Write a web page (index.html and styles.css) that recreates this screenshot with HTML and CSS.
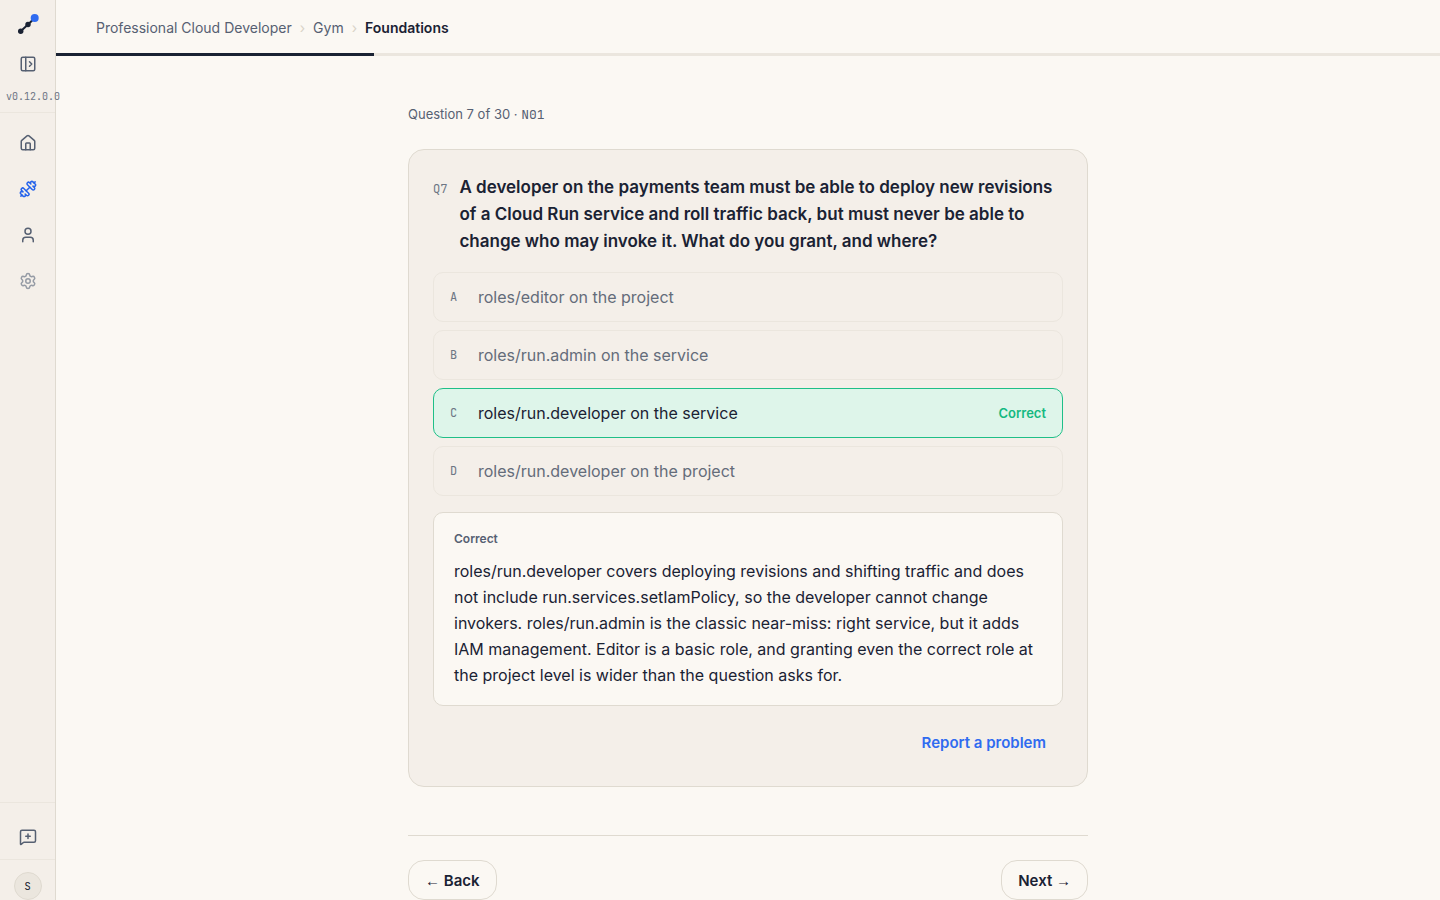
FILE: index.html
```html
<!DOCTYPE html>
<html lang="en">

<head>
    <meta charset="UTF-8">
    <meta name="viewport" content="width=device-width, initial-scale=1.0">
    <title>Foundations - Gym</title>
    <link rel="stylesheet" href="styles.css">
</head>

<body>
    <div class="app">
        <aside class="sidebar">
            <div class="sidebar-head">
                <a class="logo" href="#" aria-label="Home page">
                    <svg width="24" height="24" viewBox="0 0 24 24">
                        <path d="M4.7 19.3 12 12.5 18.7 6" stroke="#1a2233" stroke-width="2" fill="none" />
                        <circle cx="4.7" cy="19.3" r="2.7" fill="#1a2233" />
                        <circle cx="12" cy="12.5" r="2.7" fill="#1a2233" />
                        <circle cx="18.7" cy="6" r="4" fill="#2f6bf0" />
                    </svg>
                </a>
                <button class="icon-btn toggle" type="button" aria-label="Expand sidebar">
                    <svg class="icon" viewBox="0 0 24 24">
                        <rect width="18" height="18" x="3" y="3" rx="2" />
                        <path d="M9 3v18" />
                        <path d="m14 9 3 3-3 3" />
                    </svg>
                </button>
                <span class="version">v0.12.0.0</span>
            </div>
            <nav class="side-nav">
                <a class="icon-btn" href="#" aria-label="Home">
                    <svg class="icon" viewBox="0 0 24 24">
                        <path d="M15 21v-8a1 1 0 0 0-1-1h-4a1 1 0 0 0-1 1v8" />
                        <path d="M3 10a2 2 0 0 1 .709-1.528l7-6a2 2 0 0 1 2.582 0l7 6A2 2 0 0 1 21 10v9a2 2 0 0 1-2 2H5a2 2 0 0 1-2-2z" />
                    </svg>
                </a>
                <a class="icon-btn active" href="#" aria-label="Gym">
                    <svg class="icon" viewBox="0 0 24 24">
                        <path d="M17.596 12.768a2 2 0 1 0 2.829-2.829l-1.768-1.767a2 2 0 0 0 2.828-2.829l-2.828-2.828a2 2 0 0 0-2.829 2.828l-1.767-1.768a2 2 0 1 0-2.829 2.829z" />
                        <path d="m2.5 21.5 1.4-1.4" />
                        <path d="m20.1 3.9 1.4-1.4" />
                        <path d="M5.343 21.485a2 2 0 1 0 2.829-2.828l1.767 1.768a2 2 0 1 0 2.829-2.829l-6.364-6.364a2 2 0 1 0-2.829 2.829l1.768 1.767a2 2 0 0 0-2.828 2.829z" />
                        <path d="m9.6 14.4 4.8-4.8" />
                    </svg>
                </a>
                <a class="icon-btn" href="#" aria-label="Profile">
                    <svg class="icon" viewBox="0 0 24 24">
                        <path d="M19 21v-2a4 4 0 0 0-4-4H9a4 4 0 0 0-4 4v2" />
                        <circle cx="12" cy="7" r="4" />
                    </svg>
                </a>
                <a class="icon-btn muted" href="#" aria-label="Settings">
                    <svg class="icon" viewBox="0 0 24 24">
                        <path d="M9.671 4.136a2.34 2.34 0 0 1 4.659 0 2.34 2.34 0 0 0 3.319 1.915 2.34 2.34 0 0 1 2.33 4.033 2.34 2.34 0 0 0 0 3.831 2.34 2.34 0 0 1-2.33 4.033 2.34 2.34 0 0 0-3.319 1.915 2.34 2.34 0 0 1-4.659 0 2.34 2.34 0 0 0-3.32-1.915 2.34 2.34 0 0 1-2.33-4.033 2.34 2.34 0 0 0 0-3.831A2.34 2.34 0 0 1 6.35 6.051a2.34 2.34 0 0 0 3.319-1.915" />
                        <circle cx="12" cy="12" r="3" />
                    </svg>
                </a>
            </nav>
            <div class="side-feedback">
                <button class="icon-btn" type="button" aria-label="Send feedback">
                    <svg class="icon" viewBox="0 0 24 24">
                        <path d="M22 17a2 2 0 0 1-2 2H6.828a2 2 0 0 0-1.414.586l-2.202 2.202A.71.71 0 0 1 2 21.286V5a2 2 0 0 1 2-2h16a2 2 0 0 1 2 2z" />
                        <path d="M12 8v6" />
                        <path d="M9 11h6" />
                    </svg>
                </button>
            </div>
            <div class="side-user">
                <button class="avatar" type="button">S</button>
            </div>
        </aside>

        <div class="page">
            <header class="topbar">
                <nav class="breadcrumb" aria-label="Breadcrumb">
                    <a href="#">Professional Cloud Developer</a>
                    <span class="sep">›</span>
                    <a href="#">Gym</a>
                    <span class="sep">›</span>
                    <span class="current">Foundations</span>
                </nav>
                <div class="progress" role="progressbar" aria-label="Progress" aria-valuenow="23" aria-valuemin="0" aria-valuemax="100">
                    <div class="progress-fill" style="width: 23%"></div>
                </div>
            </header>

            <main class="content">
                <p class="counter">Question 7 of 30 · <span class="mono">N01</span></p>

                <section class="card">
                    <div class="question">
                        <span class="question-num">Q7</span>
                        <h1>A developer on the payments team must be able to deploy new revisions of a Cloud Run service and roll traffic back, but must never be able to change who may invoke it. What do you grant, and where?</h1>
                    </div>

                    <div class="options">
                        <button class="option" type="button" disabled>
                            <span class="letter">A</span>
                            <span>roles/editor on the project</span>
                        </button>
                        <button class="option" type="button" disabled>
                            <span class="letter">B</span>
                            <span>roles/run.admin on the service</span>
                        </button>
                        <button class="option correct" type="button" disabled>
                            <span class="letter">C</span>
                            <span>roles/run.developer on the service</span>
                            <span class="verdict">Correct</span>
                        </button>
                        <button class="option" type="button" disabled>
                            <span class="letter">D</span>
                            <span>roles/run.developer on the project</span>
                        </button>
                    </div>

                    <div class="explanation">
                        <h2>Correct</h2>
                        <p>roles/run.developer covers deploying revisions and shifting traffic and does not include run.services.setIamPolicy, so the developer cannot change invokers. roles/run.admin is the classic near-miss: right service, but it adds IAM management. Editor is a basic role, and granting even the correct role at the project level is wider than the question asks for.</p>
                    </div>

                    <div class="card-actions">
                        <button class="btn btn-ghost" type="button">Report a problem</button>
                    </div>
                </section>

                <div class="pager">
                    <button class="btn" type="button"><span class="arrow">←</span> Back</button>
                    <button class="btn" type="button">Next <span class="arrow">→</span></button>
                </div>
            </main>
        </div>
    </div>
</body>

</html>
```

FILE: styles.css
```css
* {
    box-sizing: border-box;
}

body {
    margin: 0;
    font-family: Inter, sans-serif;
    font-size: 16px;
    color: #1a2233;
    background-color: #fbf8f3;
}

h1,
h2,
p {
    margin: 0;
}

a {
    color: inherit;
    text-decoration: none;
}

button {
    font-family: inherit;
    color: inherit;
    cursor: pointer;
}

.app {
    display: flex;
    min-height: 100vh;
}

/* sidebar */
.sidebar {
    position: sticky;
    top: 0;
    z-index: 1;
    display: flex;
    flex-direction: column;
    flex-shrink: 0;
    width: 56px;
    height: 100vh;
    background-color: #f4efe9;
    border-right: 1px solid #dfdad0;
}

.sidebar-head {
    display: flex;
    flex-direction: column;
    align-items: center;
    padding: 12px 0 8px;
    border-bottom: 1px solid #ebe6de;
}

.logo {
    display: flex;
}

.icon-btn {
    display: flex;
    align-items: center;
    justify-content: center;
    width: 44px;
    height: 44px;
    padding: 0;
    border: 0;
    border-radius: 8px;
    background: none;
    color: #566072;
}

.toggle {
    height: 32px;
    margin: 12px 0 10px;
}

.icon {
    width: 18px;
    height: 18px;
    fill: none;
    stroke: currentColor;
    stroke-width: 2;
    stroke-linecap: round;
    stroke-linejoin: round;
}

.version {
    align-self: flex-start;
    padding-left: 6px;
    font-family: "JetBrains Mono", "Liberation Mono", monospace;
    font-size: 10px;
    line-height: 14px;
    color: #6d7684;
}

.side-nav {
    display: flex;
    flex-direction: column;
    flex: 1;
    align-items: center;
    gap: 2px;
    padding-top: 8px;
}

.side-nav .active {
    color: #2563eb;
}

.side-nav .muted {
    color: #959ba5;
}

.side-feedback,
.side-user {
    display: flex;
    justify-content: center;
    padding-top: 12px;
    border-top: 1px solid #ebe6de;
}

.avatar {
    width: 28px;
    height: 28px;
    padding: 0;
    border: 1px solid #dfdad0;
    border-radius: 50%;
    background-color: #ebe6de;
    font-family: "JetBrains Mono", "Liberation Mono", monospace;
    font-size: 11px;
}

/* top bar */
.page {
    flex: 1;
    min-width: 0;
}

.topbar {
    display: flex;
    flex-direction: column;
}

.breadcrumb {
    display: flex;
    align-items: center;
    gap: 8px;
    height: 53px;
    padding: 3px 40px 0;
    font-size: 14px;
    line-height: 20px;
    color: #566072;
}

.sep {
    color: #d9d3c7;
}

.current {
    font-weight: 600;
    color: #1a2233;
}

.progress {
    height: 3px;
    background-color: #ebe6de;
}

.progress-fill {
    height: 100%;
    background-color: #1a2233;
}

/* question */
.content {
    max-width: 680px;
    margin: 0 auto;
    padding-top: 48px;
}

.counter {
    margin-bottom: 24px;
    font-size: 13px;
    line-height: 20px;
    color: #566072;
}

.mono {
    font-family: "JetBrains Mono", "Liberation Mono", monospace;
}

.card {
    padding: 24px;
    border: 1px solid #dfdad0;
    border-radius: 16px;
    background-color: #f4efe9;
}

.question {
    display: flex;
    align-items: baseline;
    gap: 12px;
    margin-bottom: 17px;
}

.question-num,
.letter {
    font-family: "JetBrains Mono", "Liberation Mono", monospace;
    font-size: 12px;
    color: #6d7684;
}

.question h1 {
    font-size: 17px;
    font-weight: 600;
    line-height: 27px;
}

.options {
    display: flex;
    flex-direction: column;
    gap: 8px;
    margin-bottom: 16px;
}

.option {
    display: flex;
    align-items: center;
    gap: 16px;
    width: 100%;
    height: 50px;
    padding: 0 16px;
    border: 1px solid #ebe6de;
    border-radius: 10px;
    background: none;
    font-size: 16px;
    text-align: left;
    color: #646c7a;
    cursor: default;
}

.letter {
    width: 12px;
}

.option.correct {
    border-color: #1fbf88;
    background-color: #def5ea;
    color: #1a2233;
}

.verdict {
    margin-left: auto;
    font-size: 13px;
    font-weight: 600;
    color: #14b981;
}

.explanation {
    padding: 16px 20px;
    border: 1px solid #dfdad0;
    border-radius: 10px;
    background-color: #fbf8f3;
}

.explanation h2 {
    margin-bottom: 10px;
    font-size: 12px;
    font-weight: 600;
    line-height: 18px;
    padding-top: 1px;
    color: #566072;
}

.explanation p {
    padding-bottom: 1px;
    line-height: 26px;
}

.card-actions {
    display: flex;
    justify-content: flex-end;
    margin-top: 16px;
}

.btn {
    height: 40px;
    padding: 0 16px;
    border: 1px solid #dfdad0;
    border-radius: 16px;
    background: none;
    font-size: 15px;
    font-weight: 600;
}

.btn-ghost {
    border-color: transparent;
    color: #2f6bf0;
}

.arrow {
    font-family: "Liberation Sans", Arial, sans-serif;
    font-weight: 400;
}

.pager {
    display: flex;
    justify-content: space-between;
    margin-top: 48px;
    padding-top: 24px;
    border-top: 1px solid #dfdad0;
}
```
